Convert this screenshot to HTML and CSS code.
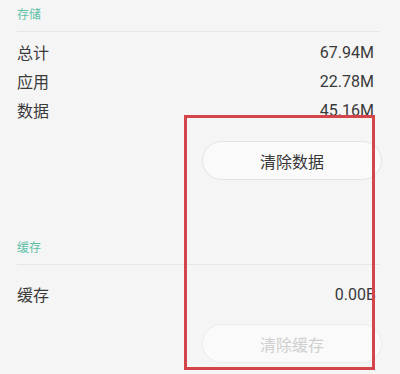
FILE: index.html
```html
<!DOCTYPE html>
<html lang="zh">
<head>
<meta charset="utf-8">
<link rel="stylesheet" href="styles.css">
</head>
<body>
<div class="page">
  <section class="section">
    <div class="section-title">存储</div>
    <div class="rows first">
      <div class="row"><span>总计</span><span class="val">67.94M</span></div>
      <div class="row"><span>应用</span><span class="val">22.78M</span></div>
      <div class="row"><span>数据</span><span class="val">45.16M</span></div>
    </div>
    <div class="btn-wrap"><button class="btn">清除数据</button></div>
  </section>
  <section class="section cache">
    <div class="section-title">缓存</div>
    <div class="rows second">
      <div class="row shifted"><span>缓存</span><span class="val">0.00B</span></div>
    </div>
    <div class="btn-wrap second-btn"><button class="btn disabled">清除缓存</button></div>
  </section>
  <div class="highlight"></div>
</div>
</body>
</html>
```
FILE: styles.css
```css
html, body {
  margin: 0;
  padding: 0;
  background: #f5f5f5;
}
body {
  font-family: "Noto Sans CJK SC", "Noto Sans", sans-serif;
  width: 400px;
  height: 374px;
  overflow: hidden;
}
.page {
  position: relative;
  padding: 0 20px 0 17px;
}
.section-title {
  height: 31px;
  line-height: 28px;
  font-size: 12px;
  color: #5dbfa5;
  border-bottom: 1px solid #e6e6e6;
}
.rows.first {
  padding-top: 6px;
}
.rows.second {
  padding-top: 15px;
}
.row {
  display: flex;
  justify-content: space-between;
  height: 29px;
  line-height: 29px;
  font-size: 16px;
  color: #3a3a3a;
  padding-right: 6px;
}
.row.shifted {
  padding-right: 4px;
}
.val {
  font-family: "Roboto", "Noto Sans", sans-serif;
  font-size: 16px;
  color: #3a3a3a;
}
.btn-wrap {
  display: flex;
  justify-content: flex-end;
  margin-right: -2px;
  margin-top: 16px;
}
.btn {
  width: 180px;
  height: 39px;
  border: 1px solid #e4e4e4;
  border-radius: 20px;
  background: #fafafa;
  font-family: "Noto Sans CJK SC", sans-serif;
  font-size: 16px;
  color: #383838;
  padding: 0;
}
.btn.disabled {
  color: #cfcfcf;
  border-color: #ececec;
}
.section.cache {
  margin-top: 53px;
}
.second-btn {
  margin-top: 15px;
}
.highlight {
  position: absolute;
  left: 184px;
  top: 115px;
  width: 185px;
  height: 249px;
  border: 3px solid #d3454b;
}
```
